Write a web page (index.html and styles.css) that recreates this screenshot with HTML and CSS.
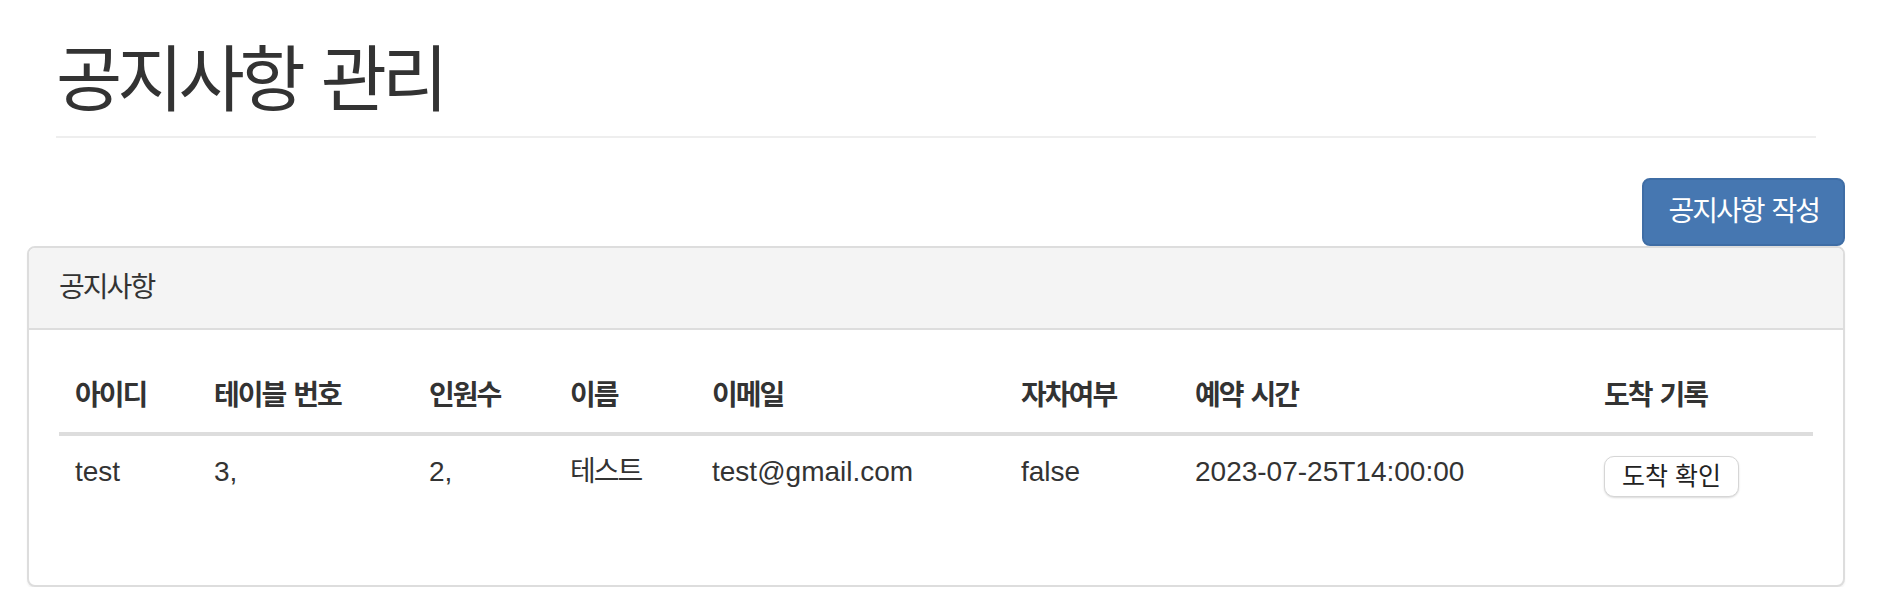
FILE: index.html
```html
<!DOCTYPE html>
<html lang="ko">
<head>
<meta charset="utf-8">
<title>공지사항 관리</title>
<link rel="stylesheet" href="styles.css">
</head>
<body>
<div class="page">
  <div class="page-header">
    <h1 class="title ko">공지사항 관리</h1>
  </div>
  <div class="toolbar">
    <button class="btn-primary ko" type="button">공지사항 작성</button>
  </div>
  <div class="panel">
    <div class="panel-heading ko">공지사항</div>
    <div class="panel-body">
      <table class="table">
        <colgroup>
          <col class="c-id">
          <col class="c-table">
          <col class="c-people">
          <col class="c-name">
          <col class="c-email">
          <col class="c-car">
          <col class="c-time">
          <col class="c-arrive">
        </colgroup>
        <thead>
          <tr>
            <th class="ko">아이디</th>
            <th class="ko">테이블 번호</th>
            <th class="ko">인원수</th>
            <th class="ko">이름</th>
            <th class="ko">이메일</th>
            <th class="ko">자차여부</th>
            <th class="ko">예약 시간</th>
            <th class="ko">도착 기록</th>
          </tr>
        </thead>
        <tbody>
          <tr>
            <td>test</td>
            <td>3,</td>
            <td>2,</td>
            <td class="ko">테스트</td>
            <td>test@gmail.com</td>
            <td>false</td>
            <td>2023-07-25T14:00:00</td>
            <td><button class="btn-small" type="button">도착 확인</button></td>
          </tr>
        </tbody>
      </table>
    </div>
  </div>
</div>
</body>
</html>
```
FILE: styles.css
```css
* {
  box-sizing: border-box;
}

html, body {
  margin: 0;
  padding: 0;
  background: #fff;
}

body {
  font-family: "Liberation Sans", "Noto Sans CJK KR", sans-serif;
  font-size: 28px;
  line-height: 40px;
  color: #333;
}

.ko {
  letter-spacing: -0.07em;
  word-spacing: 0.07em;
}

.page {
  padding: 0 37px 0 27px;
}

.page-header {
  margin: 0 29px 40px;
  padding-top: 40px;
  padding-bottom: 16px;
  border-bottom: 2px solid #eee;
}

.title {
  margin: 0;
  font-size: 72px;
  line-height: 80px;
  font-weight: 400;
  color: #333;
}

.toolbar {
  display: flex;
  justify-content: flex-end;
}

.btn-primary {
  font-family: inherit;
  font-size: 28px;
  line-height: 40px;
  padding: 12px 24px;
  color: #fff;
  background: #4677b1;
  border: 2px solid #3f6da5;
  border-radius: 8px;
  cursor: pointer;
}

.panel {
  border: 2px solid #ddd;
  border-radius: 8px;
  background: #fff;
  box-shadow: 0 2px 2px rgba(0, 0, 0, 0.05);
}

.panel-heading {
  padding: 20px 30px;
  background: #f4f4f4;
  border-bottom: 2px solid #ddd;
  border-radius: 6px 6px 0 0;
  color: #333;
}

.panel-body {
  padding: 30px;
}

.table {
  width: 100%;
  border-collapse: collapse;
  table-layout: fixed;
  margin-bottom: 40px;
}

.c-id { width: 139px; }
.c-table { width: 215px; }
.c-people { width: 141px; }
.c-name { width: 142px; }
.c-email { width: 309px; }
.c-car { width: 174px; }
.c-time { width: 409px; }
.c-arrive { width: 225px; }

.table th {
  text-align: left;
  font-weight: bold;
  padding: 16px;
  vertical-align: bottom;
  border-bottom: 4px solid #ddd;
  white-space: nowrap;
}

.table td {
  padding: 16px 16px 18px;
  vertical-align: top;
  white-space: nowrap;
}

.btn-small {
  display: inline-block;
  vertical-align: top;
  margin-top: 4px;
  height: 41px;
  padding: 0 17px;
  font-family: inherit;
  font-size: 25px;
  line-height: 39px;
  color: #222;
  background: #fff;
  border: 1px solid #d6d6d6;
  border-radius: 10px;
  box-shadow: 0 1px 2px rgba(0, 0, 0, 0.15);
  cursor: pointer;
}
```
